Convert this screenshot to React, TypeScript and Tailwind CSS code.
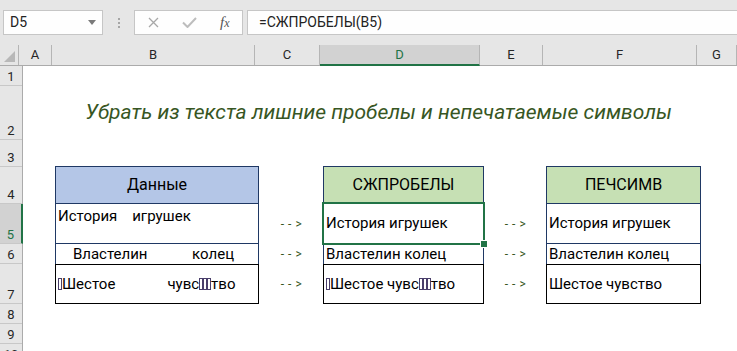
import { ReactNode } from "react";

// Control characters show up as small boxes in the cells
function Tofu() {
  return <span className="inline-block w-[4px] h-[12px] border border-[#4a3f6b] align-[-1px]" />;
}

interface TableProps {
  title: string;
  headerBg: string;
  r5: ReactNode;
  r6: ReactNode;
  r7: ReactNode;
  r5Top?: boolean;
  selected?: boolean;
}

function DataTable({ title, headerBg, r5, r6, r7, r5Top, selected }: TableProps) {
  return (
    <div className="flex flex-col text-[15px] text-black -mt-px">
      <div className={`h-[38px] border border-[#1f3864] flex items-center justify-center text-[16px] ${headerBg}`}>
        {title}
      </div>
      <div
        className={`relative h-[40px] border-x border-b border-[#1f3864] flex pl-[2px] whitespace-pre ${
          r5Top ? "items-start pt-[1px]" : "items-center"
        }`}
      >
        {r5}
        {selected && (
          <div className="absolute -left-[2px] -right-[2px] -top-[2px] -bottom-[2px] border-2 border-[#217346]">
            <div className="absolute -right-[4px] -bottom-[4px] w-[6px] h-[6px] bg-[#217346] outline outline-1 outline-white" />
          </div>
        )}
      </div>
      <div className="h-[20px] border-x border-[#1f3864] flex items-center pl-[2px] whitespace-pre">{r6}</div>
      <div className="h-[40px] border border-black flex items-center pl-[2px] whitespace-pre">{r7}</div>
    </div>
  );
}

function Arrows() {
  return (
    <div className="flex flex-col text-[12px] text-[#375623] whitespace-pre tracking-[0.5px]">
      <div className="h-[40px] flex items-center justify-center">- - &gt;</div>
      <div className="h-[20px] flex items-center justify-center">- - &gt;</div>
      <div className="h-[40px] flex items-center justify-center">- - &gt;</div>
    </div>
  );
}

const columns = [
  { name: "A", w: "w-[33px]" },
  { name: "B", w: "w-[203px]" },
  { name: "C", w: "w-[65px]" },
  { name: "D", w: "w-[160px]", active: true },
  { name: "E", w: "w-[63px]" },
  { name: "F", w: "w-[154px]" },
  { name: "G", w: "w-[40px]" },
];

const rows = [
  { n: "1", h: "h-[20px]" },
  { n: "2", h: "h-[54px]" },
  { n: "3", h: "h-[27px]" },
  { n: "4", h: "h-[37px]" },
  { n: "5", h: "h-[40px]", active: true },
  { n: "6", h: "h-[20px]" },
  { n: "7", h: "h-[40px]" },
  { n: "8", h: "h-[20px]" },
  { n: "9", h: "h-[20px]" },
  { n: "10", h: "h-[20px]" },
];

export default function App() {
  return (
    <div className="w-[737px] h-[351px] overflow-hidden bg-white font-['Roboto','Noto_Sans',sans-serif]">
      {/* formula bar */}
      <div className="h-[45px] bg-[#e6e6e6] flex items-start pt-[10px]">
        <div className="ml-[3px] w-[100px] h-[25px] border border-[#c6c6c6] bg-[#fefefe] flex items-center justify-between pl-[6px] pr-[6px] text-[14px] text-[#222]">
          <span>D5</span>
          <svg width="8" height="5" viewBox="0 0 8 5">
            <path d="M0 0 L8 0 L4 5 Z" fill="#7a7a7a" />
          </svg>
        </div>
        <div className="w-[31px] h-[25px] flex flex-col items-center justify-center gap-[2px]">
          <span className="w-[2px] h-[2px] bg-[#a6a6a6]" />
          <span className="w-[2px] h-[2px] bg-[#a6a6a6]" />
          <span className="w-[2px] h-[2px] bg-[#a6a6a6]" />
        </div>
        <div className="w-[109px] h-[25px] border border-[#c6c6c6] bg-[#fefefe] flex items-center pl-[13px]">
          <svg width="11" height="11" viewBox="0 0 11 11">
            <path d="M1 1 L10 10 M10 1 L1 10" stroke="#a8a8a8" strokeWidth="1.3" />
          </svg>
          <svg className="ml-[23px]" width="15" height="11" viewBox="0 0 15 11">
            <path d="M1 5.5 L5.5 10 L14 1" stroke="#bdbdbd" strokeWidth="2" fill="none" />
          </svg>
          <span className="ml-[23px] text-[15px] italic font-['Liberation_Serif',serif] text-[#555] leading-none">
            f<span className="text-[12px]">x</span>
          </span>
        </div>
        <div className="ml-[4px] flex-1 h-[25px] border-y border-l border-[#c6c6c6] bg-[#fefefe] flex items-center pl-[11px] text-[14px] text-[#222]">
          =СЖПРОБЕЛЫ(B5)
        </div>
      </div>

      {/* column headers */}
      <div className="flex h-[21px] bg-[#e6e6e6] border-b border-[#ababab] text-[13px] text-[#262626]">
        <div className="w-[23px] border-r border-[#b5b5b5] flex items-end justify-end pb-[3px] pr-[3px]">
          <svg width="11" height="11" viewBox="0 0 11 11">
            <path d="M11 0 L11 11 L0 11 Z" fill="#b8b8b8" />
          </svg>
        </div>
        {columns.map((c) => (
          <div
            key={c.name}
            className={`${c.w} shrink-0 flex items-center justify-center border-r border-[#b5b5b5] ${
              c.active ? "bg-[#d2d2d2] text-[#217346] border-b-2 border-b-[#217346] -mb-px" : ""
            }`}
          >
            {c.name}
          </div>
        ))}
      </div>

      {/* body */}
      <div className="flex">
        <div className="w-[23px] shrink-0 flex flex-col bg-[#e6e6e6] border-r border-[#ababab] text-[13px] text-[#262626]">
          {rows.map((r) => (
            <div
              key={r.n}
              className={`${r.h} shrink-0 flex items-end justify-center border-b border-[#c8c8c8] ${
                r.active ? "bg-[#d2d2d2] text-[#217346] border-r-2 border-r-[#217346] -mr-px" : ""
              }`}
            >
              <span className="leading-[17px]">{r.n}</span>
            </div>
          ))}
        </div>

        <div className="grid grid-cols-[33px_203px_65px_160px_63px_154px_1fr] grid-rows-[20px_54px_27px_37px_40px_20px_40px_20px_20px_20px]">
          <div className="col-start-2 col-span-5 row-start-2 flex items-center justify-center text-[21px] italic text-[#375623] whitespace-nowrap">
            Убрать из текста лишние пробелы и непечатаемые символы
          </div>

          <div className="col-start-2 row-start-4 row-span-4 -ml-px">
            <DataTable
              title="Данные"
              headerBg="bg-[#b4c6e7]"
              r5Top
              r5={"История    игрушек"}
              r6={"    Властелин            колец"}
              r7={
                <>
                  <Tofu />
                  {"Шестое              чувс"}
                  <Tofu />
                  <Tofu />
                  <Tofu />
                  {"тво"}
                </>
              }
            />
          </div>

          <div className="col-start-3 row-start-5 row-span-3">
            <Arrows />
          </div>

          <div className="col-start-4 row-start-4 row-span-4 -ml-px">
            <DataTable
              title="СЖПРОБЕЛЫ"
              headerBg="bg-[#c6e0b4]"
              selected
              r5={"История игрушек"}
              r6={"Властелин колец"}
              r7={
                <>
                  <Tofu />
                  {"Шестое чувс"}
                  <Tofu />
                  <Tofu />
                  <Tofu />
                  {"тво"}
                </>
              }
            />
          </div>

          <div className="col-start-5 row-start-5 row-span-3">
            <Arrows />
          </div>

          <div className="col-start-6 row-start-4 row-span-4 -ml-px">
            <DataTable
              title="ПЕЧСИМВ"
              headerBg="bg-[#c6e0b4]"
              r5={"История игрушек"}
              r6={"Властелин колец"}
              r7={"Шестое чувство"}
            />
          </div>
        </div>
      </div>
    </div>
  );
}
